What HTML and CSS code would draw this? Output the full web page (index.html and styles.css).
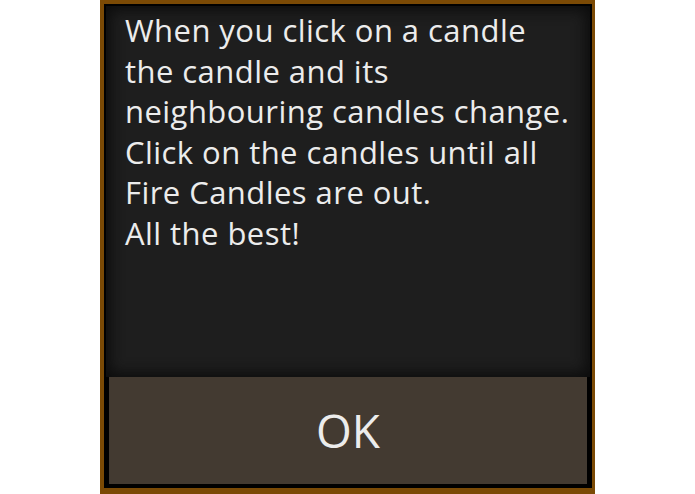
FILE: index.html
```html
<!DOCTYPE html>
<html lang="en">
<head>
<meta charset="utf-8">
<title>How to play</title>
<link rel="stylesheet" href="styles.css">
</head>
<body>
<div class="dialog">
  <div class="dialog-inner">
    <div class="message">
      <p>When you click on a candle<br>the candle and its<br>neighbouring candles change.<br>Click on the candles until all<br>Fire Candles are out.<br>All the best!</p>
    </div>
    <button class="ok-button" type="button">OK</button>
  </div>
</div>
</body>
</html>
```

FILE: styles.css
```css
html, body {
  margin: 0;
  padding: 0;
  background: #ffffff;
}

body {
  width: 695px;
  height: 494px;
  overflow: hidden;
}

.dialog {
  box-sizing: border-box;
  width: 495px;
  height: 494px;
  margin-left: 100px;
  border: 4px solid #7b4a05;
  border-right-width: 3px;
  border-bottom-width: 6px;
  background: #000000;
  padding: 2px 2px 4px 2px;
}

.dialog-inner {
  display: flex;
  flex-direction: column;
  height: 100%;
}

.message {
  flex: 1;
  background: #1e1e1e;
  box-shadow: inset 0 0 14px 4px #0c0c0c;
  padding: 4px 0 0 19px;
}

.message p {
  margin: 0;
  font-family: "Open Sans", "DejaVu Sans", sans-serif;
  font-size: 31px;
  letter-spacing: 0.45px;
  line-height: 40.5px;
  color: #ececec;
}

.ok-button {
  height: 107px;
  margin: 0 3px 0 3px;
  border: 0;
  background: #433a31;
  color: #ececec;
  font-family: "Open Sans", "DejaVu Sans", sans-serif;
  font-size: 46px;
  padding: 0;
  line-height: 107px;
}
```
